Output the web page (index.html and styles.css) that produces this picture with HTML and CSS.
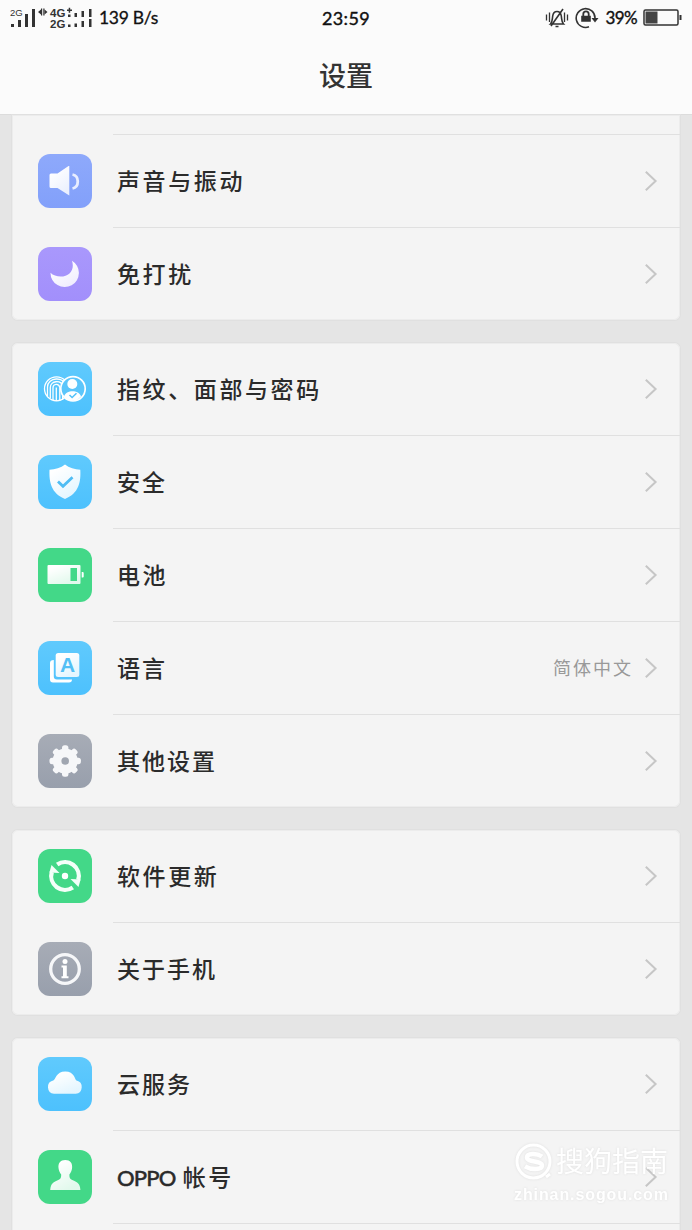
FILE: index.html
```html
<!DOCTYPE html>
<html lang="zh-CN">
<head>
<meta charset="utf-8">
<title>设置</title>
<link rel="stylesheet" href="styles.css">
</head>
<body>
<svg class="defs" width="0" height="0" aria-hidden="true">
  <defs>
    <linearGradient id="w" x1="0" y1="0" x2=".6" y2="1"><stop offset=".2" stop-color="#fff"/><stop offset="1" stop-color="#fff" stop-opacity=".84"/></linearGradient>
    <symbol id="chev" viewBox="0 0 14 22"><path d="M1.800 1.800 11.600 11 1.800 20.200" fill="none" stroke="#c6c6c6" stroke-width="2"/></symbol>
    <g id="half"><path d="M19.200 15.600A13.800 13.800 0 0 1 40.200 31" fill="none" stroke="#f4fff9" stroke-width="4.300"/><path d="M32.500 30 42.600 30.500 40.500 38z" fill="#f4fff9"/></g>
  </defs>
</svg>
<div class="screen">
  <header class="header">
    <div class="status">
      <div class="status-left">
        <svg width="86" height="22" viewBox="0 0 86 22" fill="#333">
          <text x="0" y="9" class="net-s">2G</text>
          <path d="M1 17h3v3H1zM8 13h3v7H8zM15 7h3v13h-3zM22 2h3v18h-3z"/>
          <path d="M28 5l3-2.500v5zM37.500 5l-3-2.500v5z"/><path d="M31 1.500h1.200v7H31zM33.300 1.500h1.200v7h-1.200z"/>
          <text x="40" y="10" class="net">4G</text><text x="40" y="20.500" class="net">2G</text>
          <path d="M57 2.500h5V4h-5zM58.700 .7h1.500v5h-1.500zM58 7.500h2.500V10H58zM58 17.500h2.500V20H58zM64.500 6h2.500v4h-2.500zM64.500 16.500h2.500V20h-2.500zM71.500 4h2.500v6h-2.500zM71.500 14h2.500v6h-2.500zM79 2h2.500v8H79zM79 12h2.500v8H79z"/>
        </svg>
        <span class="speed">139 B/s</span>
      </div>
      <span class="clock">23:59</span>
      <div class="status-right">
        <svg width="24" height="22" viewBox="0 0 24 22" fill="none" stroke="#333" stroke-width="1.600"><path d="M1.500 7.500v6M4.500 5.500v9.500M19.500 5.500v9.500M22.500 7.500v6" stroke-width="1.300"/><path d="M5.500 17h13c-2-2-1.600-4-2.200-8C15.500 3 8.500 3 7.700 9c-.6 4-.2 6-2.200 8zM6 19 18 2M10.500 19.500h3"/></svg>
        <svg width="24" height="22" viewBox="0 0 24 22" fill="none" stroke="#333" stroke-width="1.600"><path d="M14 19.800A9.400 9.400 0 1 1 20 11"/><path d="M16.500 11h7L20 15.500z" fill="#333" stroke="none"/><path d="M7 9.500h8V14H7z" fill="#333"/><path d="M8.300 9V7a2.700 2.700 0 0 1 5.400 0v2" stroke-width="1.800"/></svg>
        <span class="percent">39%</span>
        <svg width="39" height="18" viewBox="0 0 39 18"><rect x="1" y="1" width="34" height="15" rx="1.500" fill="none" stroke="#333" stroke-width="1.500"/><path d="M2.500 2.500h12v12h-12z" fill="#444"/><path d="M36.500 6h2v5h-2z" fill="#333"/></svg>
      </div>
    </div>
    <h1 class="title">设置</h1>
  </header>

  <main class="list">
    <section class="card card-first">
      <div class="row-tail"></div>
      <div class="row">
        <svg class="icon periwinkle" viewBox="0 0 54 54"><path d="M13 19.500h6.500L30.500 12h.8v29.500L19.500 34H13q-1.500 0-1.500-1.500V21q0-1.500 1.500-1.500z" fill="url(#w)"/><path d="M34.500 20.500c7 1.500 7 12.500 0 14" fill="none" stroke="#e9eeff" stroke-width="2.800"/></svg>
        <div class="body"><span class="label">声音与振动</span><svg class="chev"><use href="#chev"/></svg></div>
      </div>
      <div class="row">
        <svg class="icon violet" viewBox="0 0 54 54"><path d="M34 13.700A14.200 14.200 0 1 1 12.500 25.800C17 30.500 27 31 31.500 26.500 35 23 35.500 18.500 34 13.700z" fill="url(#w)"/></svg>
        <div class="body"><span class="label">免打扰</span><svg class="chev"><use href="#chev"/></svg></div>
      </div>
    </section>

    <section class="card">
      <div class="row">
        <svg class="icon blue" viewBox="0 0 54 54"><g fill="none" stroke="#fff" stroke-width="1.300"><circle cx="18.500" cy="26.800" r="12"/><path d="M9.500 34V25c0-10 17-11 18-1M12.300 36.500V25.500c0-7 11-8 12.300-1V38M15 38V26c0-4.500 6-5 6.800-.5V39M18.300 39V25.500M27 24v12"/></g><circle cx="35" cy="26.800" r="12.200" fill="#5cc6fb" stroke="#fff" stroke-width="1.700"/><circle cx="34.300" cy="22" r="5" fill="#fff"/><path d="M26 34.500c2-7 15-7 17 0-4 5.600-13 5.600-17 0z" fill="#fff"/><path d="m31.500 33 2.600 2.500 4.400-4.300" fill="none" stroke="#53c3fb" stroke-width="1.500"/></svg>
        <div class="body"><span class="label">指纹、面部与密码</span><svg class="chev"><use href="#chev"/></svg></div>
      </div>
      <div class="row">
        <svg class="icon blue" viewBox="0 0 54 54"><path d="M27 9.500c4 3.500 10 5 15.300 5.200C43 27 41 38 27 44 13 38 11 27 11.500 14.700 17 14.500 23 13 27 9.500z" fill="url(#w)"/><path d="m20 26.500 5 4.800 9.500-9" fill="none" stroke="#4fbdf4" stroke-width="2.800"/></svg>
        <div class="body"><span class="label tight">安全</span><svg class="chev"><use href="#chev"/></svg></div>
      </div>
      <div class="row">
        <svg class="icon green" viewBox="0 0 54 54"><path fill-rule="evenodd" d="M10.500 17h31q1 0 1 1v17q0 1-1 1h-31q-1 0-1-1V18q0-1 1-1zM32.500 20v13h6.500V20z" fill="url(#w)"/><path d="M43.700 24h1q1 0 1 1v3.500q0 1-1 1h-1z" fill="#fff"/></svg>
        <div class="body"><span class="label">电池</span><svg class="chev"><use href="#chev"/></svg></div>
      </div>
      <div class="row">
        <svg class="icon blue" viewBox="0 0 54 54"><path d="M15.800 19Q12 19 12 22v16.500q0 3 3 3h16q3 0 3-3H19q-3.200 0-3.200-3z" fill="#fff"/><rect x="17.700" y="12" width="23.600" height="24" rx="2.500" fill="url(#w)"/><text x="29.500" y="30.500" class="letter">A</text></svg>
        <div class="body"><span class="label tight">语言</span><span class="value">简体中文</span><svg class="chev"><use href="#chev"/></svg></div>
      </div>
      <div class="row">
        <svg class="icon gray" viewBox="0 0 54 54"><g fill="#f6f7f9"><circle cx="27.200" cy="27" r="12.600"/><rect x="24" y="11.300" width="6.400" height="31.400" rx="2.500"/><rect x="24" y="11.300" width="6.400" height="31.400" rx="2.500" transform="rotate(45 27.200 27)"/><rect x="24" y="11.300" width="6.400" height="31.400" rx="2.500" transform="rotate(90 27.200 27)"/><rect x="24" y="11.300" width="6.400" height="31.400" rx="2.500" transform="rotate(135 27.200 27)"/></g><circle cx="27.200" cy="27" r="3.800" fill="#a0a6b1"/></svg>
        <div class="body"><span class="label tight">其他设置</span><svg class="chev"><use href="#chev"/></svg></div>
      </div>
    </section>

    <section class="card">
      <div class="row">
        <svg class="icon green" viewBox="0 0 54 54"><use href="#half"/><use href="#half" transform="rotate(180 27 27)"/><circle cx="27" cy="27" r="3.200" fill="#fff"/></svg>
        <div class="body"><span class="label">软件更新</span><svg class="chev"><use href="#chev"/></svg></div>
      </div>
      <div class="row">
        <svg class="icon gray" viewBox="0 0 54 54"><circle cx="27" cy="27" r="14.300" fill="none" stroke="#f6f7f9" stroke-width="3.300"/><circle cx="27" cy="19.500" r="2.500" fill="#fff"/><path d="M23.500 23.500h5.300v10.800h1.700v2h-7v-2H25v-8.800h-1.500z" fill="#fff"/></svg>
        <div class="body"><span class="label tight">关于手机</span><svg class="chev"><use href="#chev"/></svg></div>
      </div>
    </section>

    <section class="card card-last">
      <div class="row">
        <svg class="icon blue" viewBox="0 0 54 54"><path d="M16 36.700a6.700 6.700 0 0 1-.8-13.200C17.500 23 18 14.500 27.300 14.500S37 23 38.500 23.500a6.700 6.700 0 0 1-.8 13.200z" fill="url(#w)"/></svg>
        <div class="body"><span class="label tight">云服务</span><svg class="chev"><use href="#chev"/></svg></div>
      </div>
      <div class="row">
        <svg class="icon green" viewBox="0 0 54 54"><path d="M27.300 10c5 0 7.300 3 6.800 8-.3 3-1.500 5-2.700 6.500 0 3 .3 4.500 3.500 5.800 4.500 1.900 7 3.200 7.500 9.700H12.200c.5-6.500 3-7.800 7.500-9.700 3.200-1.300 3.500-2.800 3.500-5.800-1.200-1.500-2.400-3.500-2.700-6.500-.5-5 1.800-8 6.800-8z" fill="url(#w)"/></svg>
        <div class="body"><span class="label"><span class="latin">OPPO</span>帐号</span><svg class="chev"><use href="#chev"/></svg></div>
      </div>
      <div class="row"><div class="icon"></div><div class="body"></div></div>
    </section>
  </main>

  <aside class="watermark">
    <div class="mark-top">
      <svg width="38" height="39" viewBox="0 0 38 39" fill="none" stroke="#fff"><circle cx="19.500" cy="18.500" r="16.500" stroke-width="3"/><path d="M28 13.500C23 10 13 10 13 14.500c0 5 15 3 15 8 0 4.500-11 4.500-17 .8" stroke-width="4.500"/><path d="m32 34 4-3" stroke-width="3"/></svg>
      <span class="mark-name">搜狗指南</span>
    </div>
    <div class="mark-url">zhinan.sogou.com</div>
  </aside>
</div>
</body>
</html>
```
FILE: styles.css
```css
* { box-sizing: border-box; }
body {
  margin: 0;
  background: #e5e5e5;
  font-family: "Liberation Sans", "Noto Sans CJK SC", sans-serif;
  color: #2b2b2b;
}
.defs { position: absolute; }
.screen {
  position: relative;
  width: 692px;
  height: 1230px;
  overflow: hidden;
  display: flex;
  flex-direction: column;
}
.header {
  flex: none;
  height: 115px;
  background: #fbfbfb;
  border-bottom: 1px solid #dcdcdc;
}
.status {
  height: 35px;
  display: grid;
  grid-template-columns: 1fr auto 1fr;
  align-items: center;
  padding: 0 10px;
  color: #111;
  font-family: Lato, sans-serif;
  font-size: 18px;
  line-height: 22px;
}
.status-left { display: flex; align-items: center; gap: 3px; }
.speed { font-size: 17.500px; letter-spacing: -.3px; -webkit-text-stroke: .3px; }
.clock { letter-spacing: .3px; -webkit-text-stroke: .4px; }
.status-right { display: flex; align-items: center; justify-content: flex-end; gap: 6px; }
.percent { font-size: 17px; -webkit-text-stroke: .4px; letter-spacing: -.6px; }
.net { font: bold 11.500px "Liberation Sans", sans-serif; }
.net-s { font: 9.500px "Liberation Sans", sans-serif; }
.title {
  margin: 0;
  height: 79px;
  text-align: center;
  font-size: 27px;
  font-weight: 500;
  line-height: 84px;
  color: #333;
}
.list { flex: none; display: flex; flex-direction: column; gap: 23px; padding: 0 12px; }
.card {
  background: #f4f4f4;
  border-radius: 6px;
  box-shadow: inset 0 0 0 1px #ececec, 0 0 0 1px #e0e0e0;
}
.card-first { border-radius: 0 0 6px 6px; }
.row-tail { height: 20px; margin-left: 101px; border-bottom: 1px solid #e0e0e0; }
.row { height: 93px; display: flex; align-items: flex-start; padding-left: 26px; }
.card:not(.card-last) .row:last-child { height: 92px; }
.icon { width: 54px; height: 54px; margin-top: 19px; border-radius: 12px; flex: none; }
.periwinkle { background: linear-gradient(#8ea9fb, #82a0fa); }
.violet { background: linear-gradient(#a998fc, #a28ffb); }
.blue { background: linear-gradient(#60cafd, #4dc1fd); }
.green { background: #43d888; }
.gray { background: linear-gradient(#a7acb6, #989fac); }
.body {
  flex: 1;
  align-self: stretch;
  margin-left: 21px;
  padding: 0 22px 0 4px;
  display: flex;
  align-items: center;
  border-bottom: 1px solid #e0e0e0;
}
.card:not(.card-last) .row:last-child .body { border-bottom: 0; }
.label { flex: 1; padding-top: 1px; font-size: 23px; font-weight: 500; line-height: 34px; letter-spacing: 2.600px; }
.tight { letter-spacing: 2px; }
.latin { font-family: Lato, sans-serif; font-size: 22px; letter-spacing: -.8px; margin-right: 7px; -webkit-text-stroke: .4px; }
.value { padding-top: 2px; font-size: 18px; letter-spacing: 2px; line-height: 26px; color: #999; margin-right: 11px; }
.chev { width: 14px; height: 22px; }
.letter { font: bold 21px "Liberation Sans", sans-serif; fill: #52bff5; text-anchor: middle; }
.watermark {
  position: absolute;
  left: 514px;
  top: 1143px;
  width: 156px;
  color: #fff;
  filter: drop-shadow(0 0 1px #dedede);
}
.mark-top { display: flex; align-items: center; gap: 4px; }
.mark-name { font-size: 28px; line-height: 39px; white-space: nowrap; }
.mark-url { font-size: 16px; font-weight: bold; line-height: 26px; letter-spacing: .9px; white-space: nowrap; }
```
